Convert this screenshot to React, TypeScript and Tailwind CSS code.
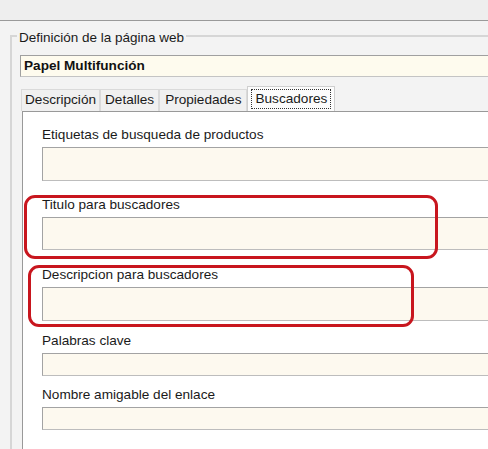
import React from 'react'

const font = { fontFamily: '"Liberation Sans", Arial, sans-serif' }

interface FieldProps {
  label: string
  height: string
  gap: string
}

function Field({ label, height, gap }: FieldProps): React.ReactElement {
  return (
    <div className={gap}>
      <div className="text-[13.6px] leading-[16px] text-[#1a1a1a] mb-[4px]">{label}</div>
      <div className={`${height} bg-[#fdf9ef] border border-[#a3a3a3] border-b-[#bdbdbd]`} />
    </div>
  )
}

const tabs = [
  { name: 'Descripción', pad: 'px-[3px]' },
  { name: 'Detalles', pad: 'px-[4px]' },
  { name: 'Propiedades', pad: 'px-[5px]' },
]

export default function App(): React.ReactElement {
  return (
    <div className="relative w-[488px] h-[449px] overflow-hidden bg-[#f3f3f3]" style={font}>
      {/* window strip */}
      <div className="h-[21px] bg-[#eeeeee] border-b border-[#9a9a9a]" />

      <div className="pl-[10px] pt-[7px]">
        <fieldset className="w-[560px] border-l-2 border-t-2 border-[#d6d6d6] pl-[8px] pb-[40px]">
          <legend className="ml-[-3px] px-[2px] translate-y-[2px] text-[13.5px] leading-[16px] text-[#1a1a1a]">
            Definición de la página web
          </legend>

          {/* name field */}
          <div className="mt-[11px] h-[22px] flex items-center px-[3px] bg-[#fefbee] border border-[#a0a0a0] border-b-[#c4c4c4] text-[13.6px] font-bold text-[#111]">
            Papel Multifunción
          </div>

          {/* tabs */}
          <div className="mt-[9px] ml-[1px] flex items-end">
            {tabs.map((t) => (
              <div key={t.name} className={`h-[22px] ${t.pad} flex items-center bg-[#f0f0f0] border border-b-0 border-[#dadada] text-[13.6px] text-[#1a1a1a]`}>
                {t.name}
              </div>
            ))}
            <div className="h-[25px] px-[3px] pt-[2px] bg-[#fcfcfc] border border-b-0 border-[#cfcfcf] text-[13.6px] text-[#1a1a1a]">
              <span className="block border border-dotted border-[#333] px-[3px] leading-[18px]">Buscadores</span>
            </div>
          </div>

          {/* tab page */}
          <div className="ml-[2px] h-[360px] bg-white border-t border-l border-[#999999] pl-[19px] pt-[15px]">
            <Field label="Etiquetas de busqueda de productos" height="h-[34px]" gap="" />
            <Field label="Titulo para buscadores" height="h-[33px]" gap="mt-[16px]" />
            <Field label="Descripcion para buscadores" height="h-[34px]" gap="mt-[17px]" />
            <Field label="Palabras clave" height="h-[23px]" gap="mt-[12px]" />
            <Field label="Nombre amigable del enlace" height="h-[23px]" gap="mt-[11px]" />
          </div>
        </fieldset>
      </div>

      {/* red highlight marks */}
      <div className="absolute left-[24px] top-[195px] w-[414px] h-[64px] border-[3px] border-[#c8161e] rounded-[11px] pointer-events-none" />
      <div className="absolute left-[28px] top-[265px] w-[386px] h-[62px] border-[3px] border-[#c8161e] rounded-[11px] pointer-events-none" />
    </div>
  )
}
